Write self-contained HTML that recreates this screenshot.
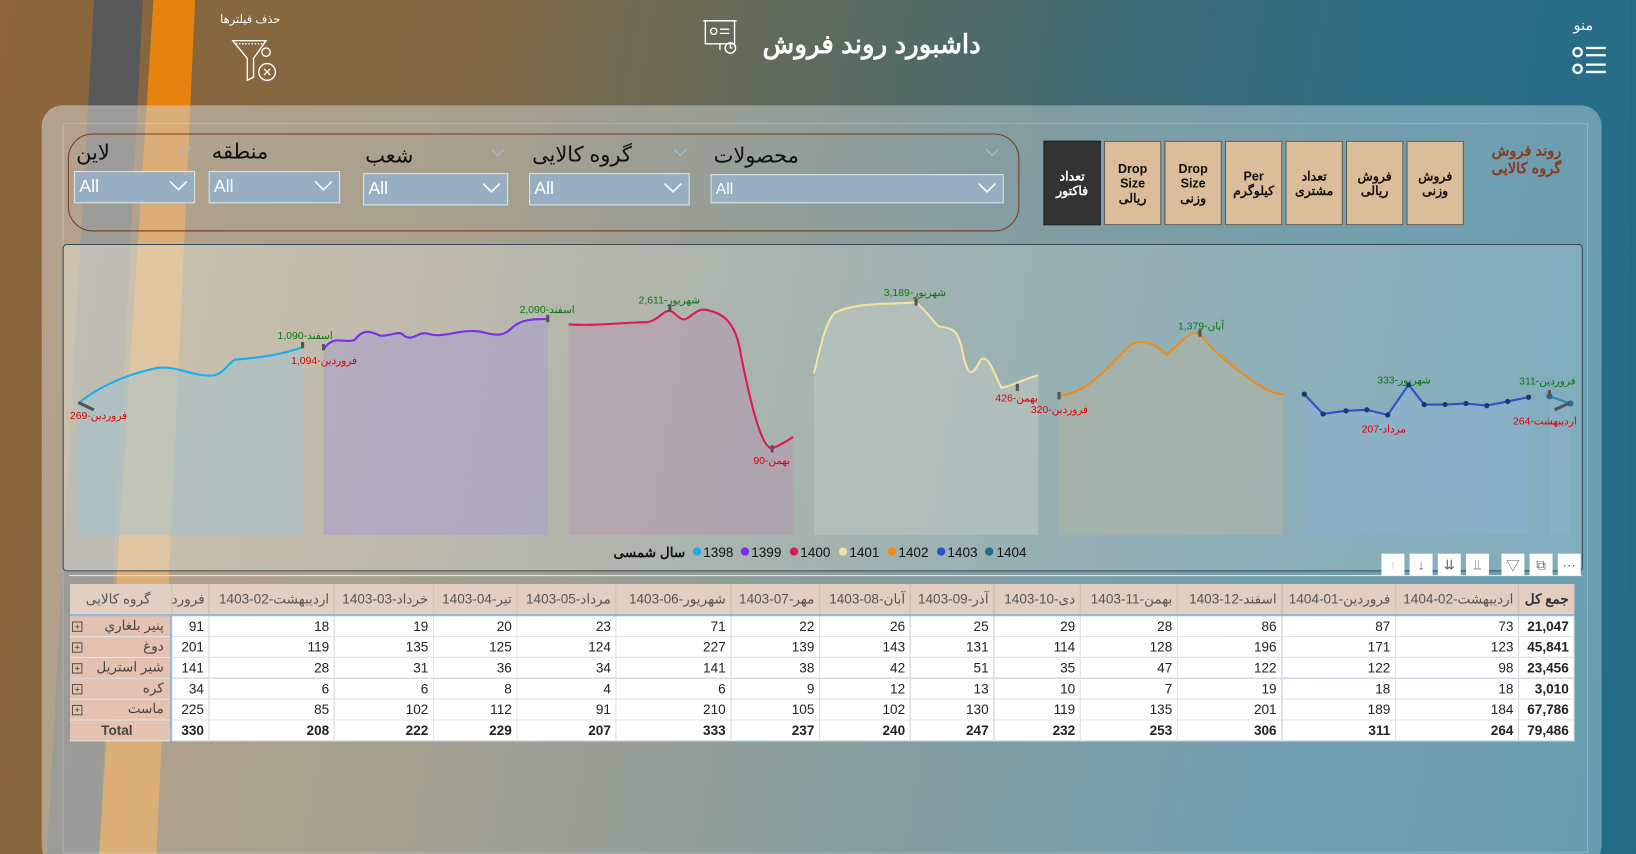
<!DOCTYPE html>
<html><head><meta charset="utf-8"><style>
*{margin:0;padding:0;box-sizing:border-box}
html,body{width:1636px;height:854px;overflow:hidden}
body{font-family:"Liberation Sans","Noto Sans CJK SC",sans-serif;background:#2a6f88}
#c{position:absolute;left:0;top:0;width:1568px;height:819px;transform:scale(1.0434,1.0427);transform-origin:0 0;overflow:hidden;
background:linear-gradient(100deg,#8d663a 0%,#7f6845 28%,#5f6b5c 45%,#3f6a72 62%,#2b6e86 80%,#226c88 100%)}
.abs{position:absolute}
.stripe{position:absolute;top:0;left:0;width:1568px;height:819px}
#panel{left:40px;top:101px;width:1495px;height:730px;border-radius:20px;background:linear-gradient(100deg,rgba(215,212,205,.55) 0%,rgba(190,200,200,.55) 45%,rgba(150,190,205,.6) 100%)}
#rstrip{left:1562px;top:0;width:6px;height:819px;background:#236b85}
.slbl{position:absolute;font-size:20px;color:#111;direction:rtl}
.sbox{position:absolute;background:#97afc0;border:1.5px solid #dbe3e8;color:#fff;font-size:17px;padding:4px 0 0 4px}
.sbox svg{position:absolute;right:6px;top:8px}
.chev{position:absolute}
.btn{position:absolute;top:135px;width:55px;height:81px;background:#dcbd9a;border:1.5px solid #5a5a55;font-size:12px;font-weight:bold;color:#111;display:flex;align-items:center;justify-content:center;text-align:center;line-height:14px;direction:rtl}
table{position:absolute;left:67px;top:560px;border-collapse:collapse;table-layout:fixed;width:1441px;font-size:13px}
td,th{overflow:hidden;white-space:nowrap}
th{height:30px;background:#e3cec2;color:#555;font-weight:normal;text-align:right;padding-right:4px;border-right:1px solid #d8c4b8;border-bottom:2px solid #8fbbe6}
td{height:20px;background:#fff;text-align:right;padding-right:4px;color:#222;border-right:1px solid #e6e6e6;border-bottom:1px solid #e2e8ee;font-size:13px}
td.rh{background:#e5c2b0;color:#444;padding-right:6px;border-right:2px solid #8fbbe6;direction:rtl;text-align:right}
td.rh span.pl{display:inline-block;width:10px;height:10px;border:1px solid #555;font-size:9px;line-height:8px;text-align:center;float:left;margin:4px 0 0 2px;color:#333}
tr.tot td{font-weight:bold;color:#222}
.tb{position:absolute;top:531px;width:22px;height:21px;background:#fff;display:flex;align-items:center;justify-content:center;color:#666;font-size:13px}
</style></head><body><div id="c">
<svg class="stripe" viewBox="0 0 1568 819">
<polygon points="90,0 137,0 95,819 45,819" fill="#595959"/>
<polygon points="147,0 187,0 150,819 95,819" fill="#e6830f"/>
</svg>
<div id="panel" class="abs"></div>
<div class="abs" style="left:60px;top:118px;width:1462px;height:700px;border:1px solid rgba(220,230,235,.3)"></div>
<div id="rstrip" class="abs"></div>

<div class="abs" style="left:211px;top:12px;font-size:11px;color:#fff;direction:rtl">حذف فیلترها</div>
<svg class="abs" style="left:222px;top:36px" width="48" height="46" viewBox="0 0 48 46"><g fill="none" stroke="#fff" stroke-width="1.3"><path d="M1,3 H33 L21,20 V38 L15,41 V20 Z"/><path d="M4,6 H30" stroke-dasharray="1.5 1.5"/><circle cx="33" cy="14" r="4"/><circle cx="34" cy="33" r="8"/><path d="M31,30 l6,6 M37,30 l-6,6"/></g></svg>
<div class="abs" style="left:690px;top:28px;width:250px;text-align:right;font-size:25px;font-weight:bold;color:#fff;direction:rtl">داشبورد روند فروش</div>
<svg class="abs" style="left:673px;top:18px" width="38" height="36" viewBox="0 0 38 36"><g fill="none" stroke="#fff" stroke-width="1.3"><rect x="3" y="2" width="28" height="22"/><path d="M1,2 H33 M17,24 v6"/><circle cx="11" cy="12" r="3"/><path d="M17,10 h9 M17,14 h9"/><circle cx="27" cy="28" r="5"/><path d="M27,25 v3 h2"/></g></svg>
<div class="abs" style="left:1508px;top:16px;font-size:14px;color:#fff;direction:rtl">منو</div>
<svg class="abs" style="left:1506px;top:42px" width="36" height="32" viewBox="0 0 36 32"><g fill="none" stroke="#fff" stroke-width="2.2"><circle cx="6" cy="8" r="4"/><circle cx="6" cy="24" r="4"/><path d="M14,4 H33 M14,11 H33 M14,20 H33 M14,27 H33"/></g></svg>

<div class="abs" style="left:65px;top:128px;width:912px;height:94px;border:1.3px solid #7a3a22;border-radius:24px"></div>
<div class="slbl" style="left:73px;top:134px">لاین</div>
<div class="slbl" style="left:203px;top:133px">منطقه</div>
<div class="slbl" style="left:350px;top:137px">شعب</div>
<div class="slbl" style="left:510px;top:136px">گروه کالایی</div>
<div class="slbl" style="left:684px;top:137px">محصولات</div>
<svg class="chev" style="left:170px;top:140px" width="14" height="8"><path d="M1,1 L7,7 L13,1" fill="none" stroke="#9fbfcc" stroke-width="1.3"/></svg>
<svg class="chev" style="left:470px;top:142px" width="14" height="8"><path d="M1,1 L7,7 L13,1" fill="none" stroke="#9fbfcc" stroke-width="1.3"/></svg>
<svg class="chev" style="left:645px;top:142px" width="14" height="8"><path d="M1,1 L7,7 L13,1" fill="none" stroke="#9fbfcc" stroke-width="1.3"/></svg>
<svg class="chev" style="left:944px;top:142px" width="14" height="8"><path d="M1,1 L7,7 L13,1" fill="none" stroke="#9fbfcc" stroke-width="1.3"/></svg>
<div class="sbox" style="left:71px;top:164px;width:116px;height:31px">All<svg width="18" height="10"><path d="M1,1 L9,9 L17,1" fill="none" stroke="#fff" stroke-width="1.5"/></svg></div>
<div class="sbox" style="left:200px;top:164px;width:126px;height:31px">All<svg width="18" height="10"><path d="M1,1 L9,9 L17,1" fill="none" stroke="#fff" stroke-width="1.5"/></svg></div>
<div class="sbox" style="left:348px;top:166px;width:139px;height:31px">All<svg width="18" height="10"><path d="M1,1 L9,9 L17,1" fill="none" stroke="#fff" stroke-width="1.5"/></svg></div>
<div class="sbox" style="left:507px;top:166px;width:154px;height:31px">All<svg width="18" height="10"><path d="M1,1 L9,9 L17,1" fill="none" stroke="#fff" stroke-width="1.5"/></svg></div>
<div class="sbox" style="left:681px;top:167px;width:281px;height:28px;font-size:15px;padding-top:5px">All<svg width="18" height="10" style="top:7px"><path d="M1,1 L9,9 L17,1" fill="none" stroke="#fff" stroke-width="1.5"/></svg></div>

<div class="btn" style="left:1000px;background:#333;color:#fff;border-color:#222">تعداد<br>فاکتور</div>
<div class="btn" style="left:1058px">Drop<br>Size<br>ریالی</div>
<div class="btn" style="left:1116px">Drop<br>Size<br>وزنی</div>
<div class="btn" style="left:1174px">Per<br>کیلوگرم</div>
<div class="btn" style="left:1232px">تعداد<br>مشتری</div>
<div class="btn" style="left:1290px">فروش<br>ریالی</div>
<div class="btn" style="left:1348px">فروش<br>وزنی</div>
<div class="abs" style="left:1423px;top:136px;width:80px;text-align:center;color:#8a3a1e;font-size:14px;font-weight:bold;line-height:17px;direction:rtl">روند فروش<br>گروه کالایی</div>

<div class="abs" style="left:60px;top:234px;width:1457px;height:314px;border:1.3px solid #3a4a55;border-radius:4px;background:linear-gradient(100deg,rgba(235,230,215,.45),rgba(200,210,205,.4) 50%,rgba(170,200,210,.35))"></div>
<svg class="abs" style="left:0;top:0" width="1568" height="819" viewBox="0 0 1568 819" font-family="Liberation Sans, Noto Sans CJK SC, sans-serif" font-size="10">
<g opacity="0.9">
<path d="M75,387 C95,370 125,358 150,353 C170,350 185,362 205,360 C215,358 220,347 225,345 C250,343 270,340 290,333 V513 H75Z" fill="#9ec2d0" opacity=".55"/>
<path d="M310,335 C320,320 330,330 340,326 C350,312 360,321 365,322 C375,322 380,318 385,320 C395,330 400,317 410,320 C425,325 440,315 460,318 C470,320 480,325 490,315 C500,305 515,306 525,306 V513 H310Z" fill="#a79ccf" opacity=".6"/>
<path d="M545,311 C570,313 600,309 620,309 C630,308 635,298 642,298 C648,300 652,308 657,306 C663,304 667,296 676,297 C690,300 705,305 710,340 C720,390 730,430 740,430 C745,428 752,425 760,419 V513 H545Z" fill="#b59aaf" opacity=".6"/>
<path d="M780,358 C785,340 790,310 800,300 C820,290 850,292 878,290 C890,300 895,310 900,313 C915,315 918,318 922,335 C928,365 932,360 940,345 C948,338 955,365 960,372 C970,370 985,362 995,360 V513 H780Z" fill="#bcc6c0" opacity=".7"/>
<path d="M1015,380 C1050,375 1070,340 1085,330 C1095,325 1108,330 1118,340 C1130,332 1140,315 1150,320 C1165,340 1180,350 1200,365 C1210,372 1220,378 1230,378 V513 H1015Z" fill="#aeb4a6" opacity=".7"/>
<path d="M1250,378 L1268,397 L1290,394 L1310,393 L1330,398 L1350,369 L1365,388 L1385,388 L1405,387 L1425,389 L1445,385 L1465,381 V513 H1250Z" fill="#8fb0d0" opacity=".7"/>
<path d="M1485,380 L1505,387 V513 H1485Z" fill="#8fb0c6" opacity=".7"/>
</g>
<g fill="none" stroke-width="2">
<path d="M75,387 C95,370 125,358 150,353 C170,350 185,362 205,360 C215,358 220,347 225,345 C250,343 270,340 290,333" stroke="#1aaeea"/>
<path d="M310,335 C320,320 330,330 340,326 C350,312 360,321 365,322 C375,322 380,318 385,320 C395,330 400,317 410,320 C425,325 440,315 460,318 C470,320 480,325 490,315 C500,305 515,306 525,306" stroke="#7a2ee6"/>
<path d="M545,311 C570,313 600,309 620,309 C630,308 635,298 642,298 C648,300 652,308 657,306 C663,304 667,296 676,297 C690,300 705,305 710,340 C720,390 730,430 740,430 C745,428 752,425 760,419" stroke="#dc1858"/>
<path d="M780,358 C785,340 790,310 800,300 C820,290 850,292 878,290 C890,300 895,310 900,313 C915,315 918,318 922,335 C928,365 932,360 940,345 C948,338 955,365 960,372 C970,370 985,362 995,360" stroke="#f4e3a0"/>
<path d="M1015,380 C1050,375 1070,340 1085,330 C1095,325 1108,330 1118,340 C1130,332 1140,315 1150,320 C1165,340 1180,350 1200,365 C1210,372 1220,378 1230,378" stroke="#f08c16"/>
<path d="M1250,378 L1268,397 L1290,394 L1310,393 L1330,398 L1350,369 L1365,388 L1385,388 L1405,387 L1425,389 L1445,385 L1465,381" stroke="#2f4fcc"/>
<path d="M1485,380 L1505,387" stroke="#2a8ab0"/>
</g>
<g fill="#123a6a"><circle cx="1250" cy="378" r="2.5"/><circle cx="1268" cy="397" r="2.5"/><circle cx="1290" cy="394" r="2.5"/><circle cx="1310" cy="393" r="2.5"/><circle cx="1330" cy="398" r="2.5"/><circle cx="1350" cy="369" r="2.5"/><circle cx="1365" cy="388" r="2.5"/><circle cx="1385" cy="388" r="2.5"/><circle cx="1405" cy="387" r="2.5"/><circle cx="1425" cy="389" r="2.5"/><circle cx="1445" cy="385" r="2.5"/><circle cx="1465" cy="381" r="2.5"/><circle cx="1485" cy="380" r="3" fill="#1a6fb0"/><circle cx="1505" cy="387" r="3" fill="#1a6fb0"/></g>
<g stroke="#555" stroke-width="3"><path d="M75,386 L90,393"/><path d="M290,328 v6 M310,330 v6 M525,302 v7 M642,292 v7 M740,427 v7 M878,286 v7 M975,368 v7 M1015,376 v7 M1150,316 v7 M1485,374 v7 M1490,393 L1505,386"/></g>
<g fill="#e00000"><text x="67" y="402">269-فروردین</text><text x="279" y="349">1,094-فروردین</text><text x="722" y="445">90-بهمن</text><text x="954" y="385">426-بهمن</text><text x="988" y="396">320-فروردین</text><text x="1305" y="415">207-مرداد</text><text x="1450" y="407">264-اردیبهشت</text></g>
<g fill="#0a7a10"><text x="266" y="325">1,090-اسفند</text><text x="498" y="300">2,090-اسفند</text><text x="612" y="291">2,611-شهریور</text><text x="847" y="284">3,189-شهریور</text><text x="1129" y="316">1,379-آبان</text><text x="1320" y="368">333-شهریور</text><text x="1456" y="369">311-فروردین</text></g>
<g font-size="13" fill="#111"><text x="588" y="534" font-weight="bold">سال شمسی</text>
<circle cx="668" cy="529" r="4" fill="#1aaeea"/><text x="674" y="534">1398</text>
<circle cx="714" cy="529" r="4" fill="#7a2ee6"/><text x="720" y="534">1399</text>
<circle cx="761" cy="529" r="4" fill="#dc1858"/><text x="767" y="534">1400</text>
<circle cx="808" cy="529" r="4" fill="#f4e3a0"/><text x="814" y="534">1401</text>
<circle cx="855" cy="529" r="4" fill="#f08c16"/><text x="861" y="534">1402</text>
<circle cx="902" cy="529" r="4" fill="#2f4fcc"/><text x="908" y="534">1403</text>
<circle cx="948" cy="529" r="4" fill="#1f6f8b"/><text x="955" y="534">1404</text></g>
<path d="M66,552 H1516" stroke="#dde4e8" stroke-width="1"/>
</svg>
<div class="tb" style="left:1324px;color:#ccc">↑</div><div class="tb" style="left:1351px">↓</div><div class="tb" style="left:1378px">⇊</div><div class="tb" style="left:1405px">⫫</div><div class="tb" style="left:1439px">▽</div><div class="tb" style="left:1466px">⧉</div><div class="tb" style="left:1493px">···</div>

<table>
<colgroup><col style="width:97px"><col style="width:36px"><col style="width:120px"><col style="width:95px"><col style="width:80px"><col style="width:95px"><col style="width:110px"><col style="width:85px"><col style="width:87px"><col style="width:80px"><col style="width:83px"><col style="width:93px"><col style="width:100px"><col style="width:109px"><col style="width:118px"><col style="width:53px"></colgroup>
<tr><th style="text-align:center;direction:rtl">گروه کالایی</th><th>فرورد</th><th dir="ltr">1403-02-اردیبهشت</th><th dir="ltr">1403-03-خرداد</th><th dir="ltr">1403-04-تیر</th><th dir="ltr">1403-05-مرداد</th><th dir="ltr">1403-06-شهریور</th><th dir="ltr">1403-07-مهر</th><th dir="ltr">1403-08-آبان</th><th dir="ltr">1403-09-آذر</th><th dir="ltr">1403-10-دی</th><th dir="ltr">1403-11-بهمن</th><th dir="ltr">1403-12-اسفند</th><th dir="ltr">1404-01-فروردین</th><th dir="ltr">1404-02-اردیبهشت</th><th style="color:#333;font-weight:bold;direction:rtl">جمع کل</th></tr>
<tr><td class="rh"><span class="pl">+</span>پنیر بلغاري</td><td>91</td><td>18</td><td>19</td><td>20</td><td>23</td><td>71</td><td>22</td><td>26</td><td>25</td><td>29</td><td>28</td><td>86</td><td>87</td><td>73</td><td><b>21,047</b></td></tr>
<tr><td class="rh"><span class="pl">+</span>دوغ</td><td>201</td><td>119</td><td>135</td><td>125</td><td>124</td><td>227</td><td>139</td><td>143</td><td>131</td><td>114</td><td>128</td><td>196</td><td>171</td><td>123</td><td><b>45,841</b></td></tr>
<tr><td class="rh"><span class="pl">+</span>شير استريل</td><td>141</td><td>28</td><td>31</td><td>36</td><td>34</td><td>141</td><td>38</td><td>42</td><td>51</td><td>35</td><td>47</td><td>122</td><td>122</td><td>98</td><td><b>23,456</b></td></tr>
<tr><td class="rh"><span class="pl">+</span>کره</td><td>34</td><td>6</td><td>6</td><td>8</td><td>4</td><td>6</td><td>9</td><td>12</td><td>13</td><td>10</td><td>7</td><td>19</td><td>18</td><td>18</td><td><b>3,010</b></td></tr>
<tr><td class="rh"><span class="pl">+</span>ماست</td><td>225</td><td>85</td><td>102</td><td>112</td><td>91</td><td>210</td><td>105</td><td>102</td><td>130</td><td>119</td><td>135</td><td>201</td><td>189</td><td>184</td><td><b>67,786</b></td></tr>
<tr class="tot"><td class="rh" style="text-align:center;font-weight:bold;color:#444">Total</td><td>330</td><td>208</td><td>222</td><td>229</td><td>207</td><td>333</td><td>237</td><td>240</td><td>247</td><td>232</td><td>253</td><td>306</td><td>311</td><td>264</td><td>79,486</td></tr>
</table>
</div></body></html>
